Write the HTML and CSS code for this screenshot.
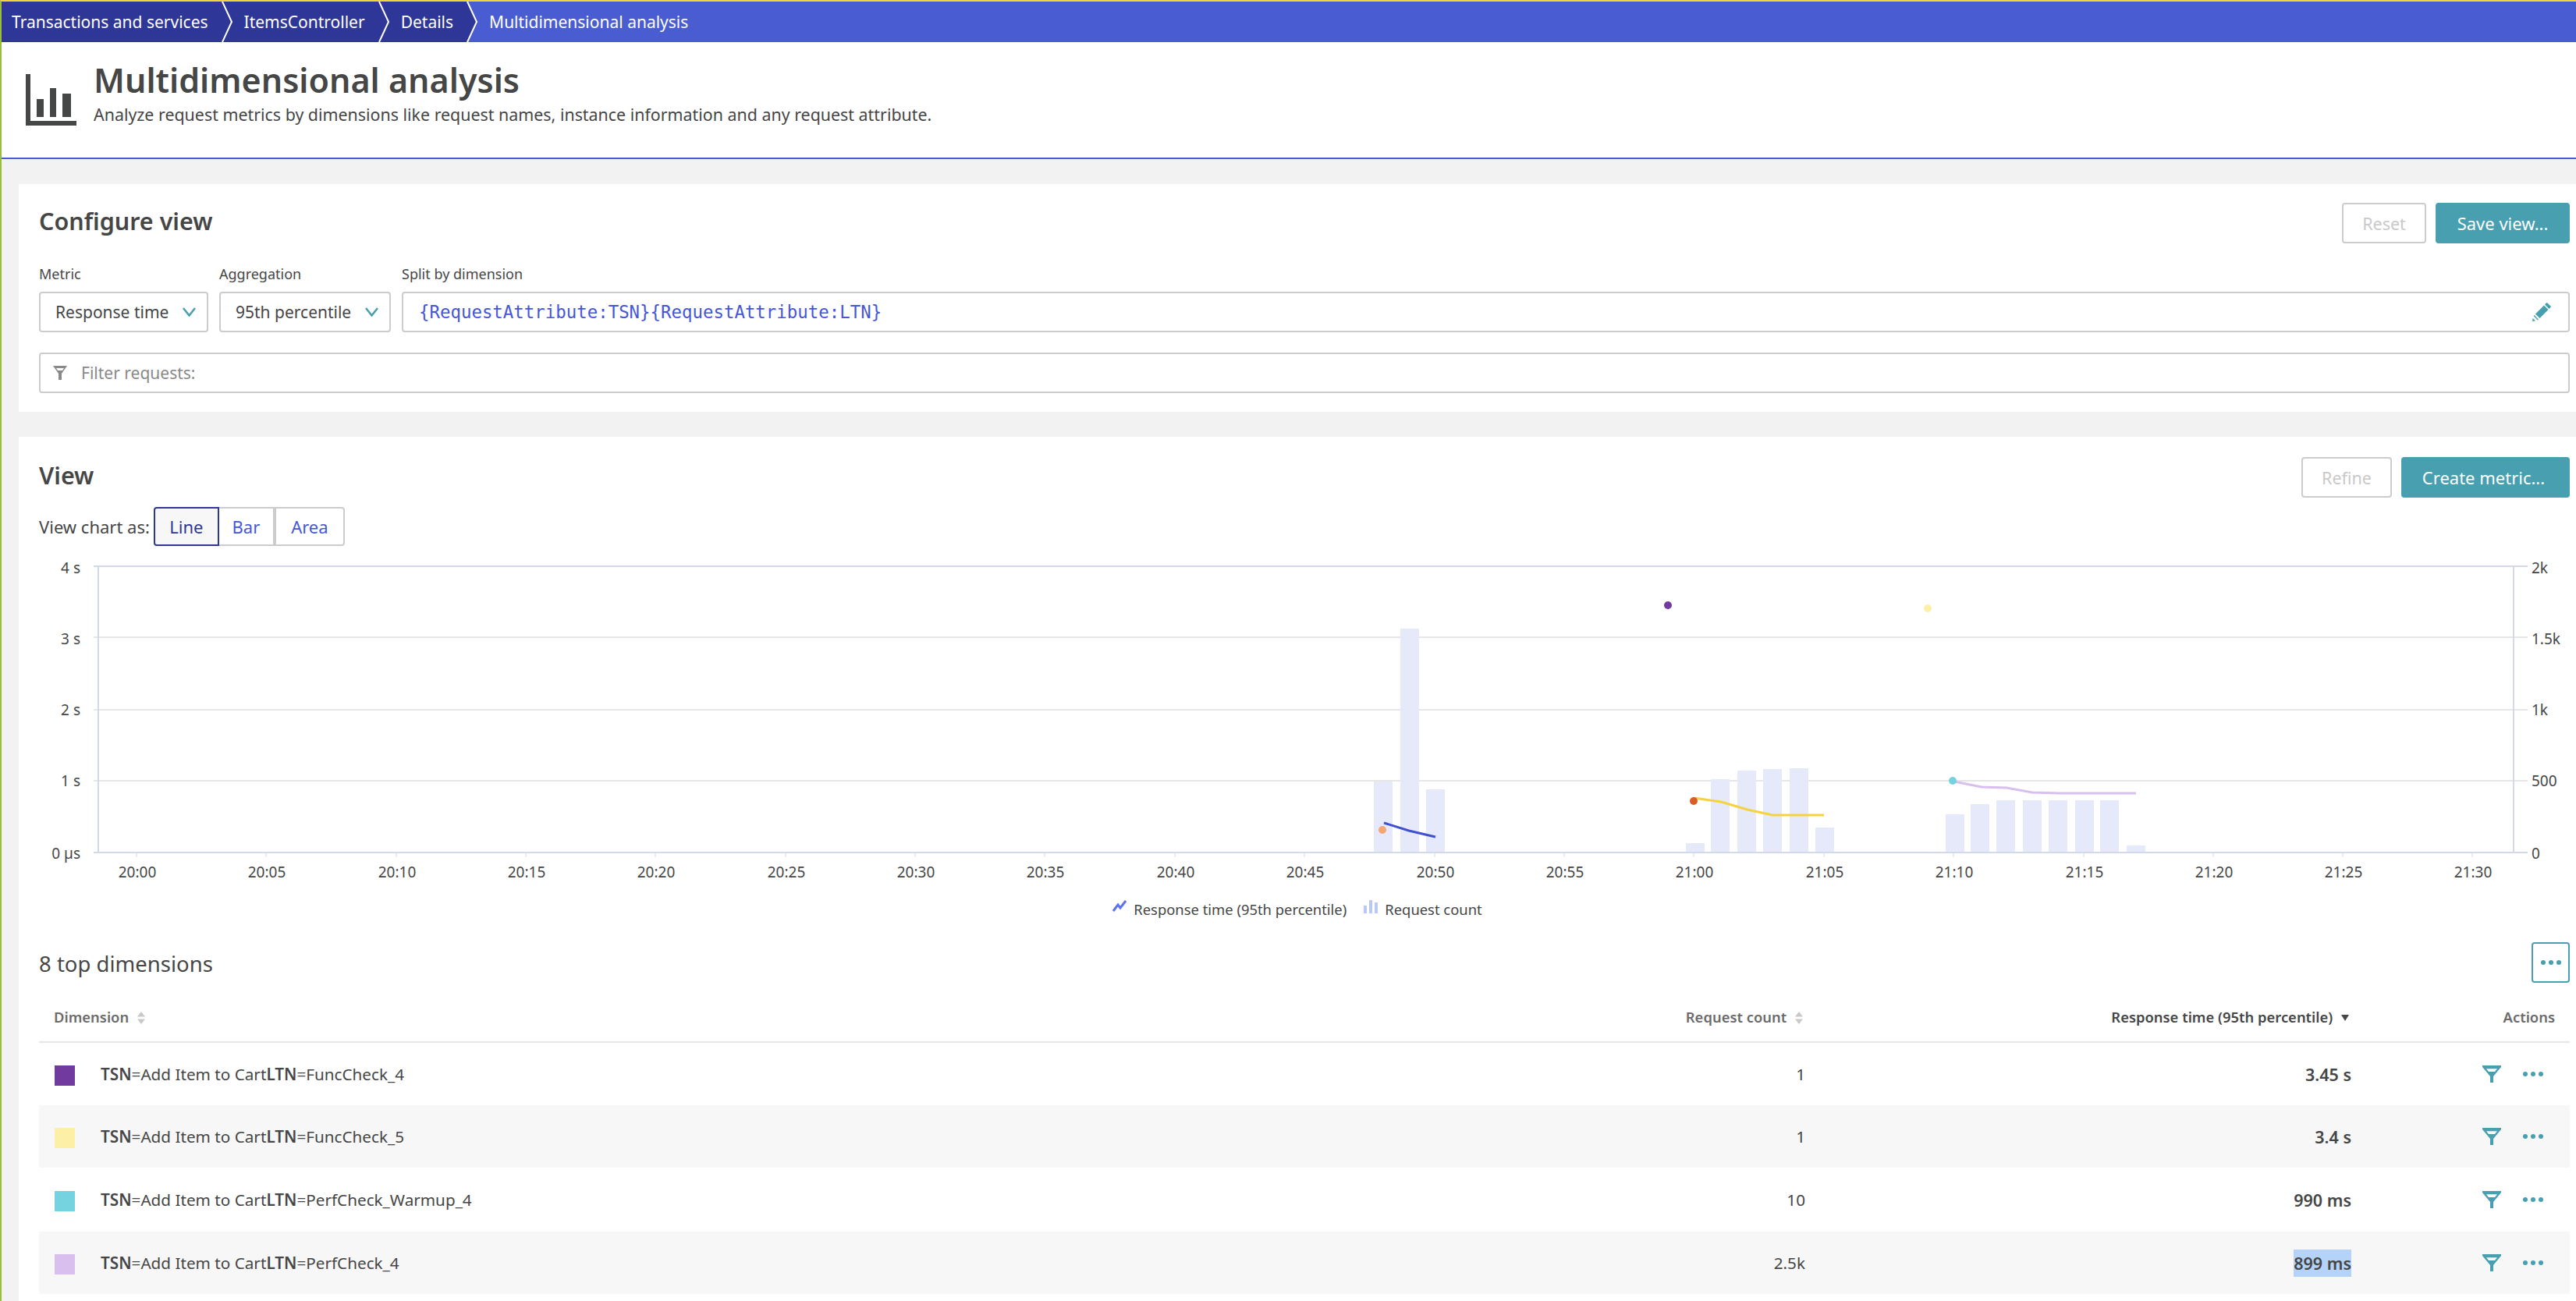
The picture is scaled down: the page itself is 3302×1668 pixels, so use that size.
FILE: index.html
```html
<!DOCTYPE html>
<html lang="en">
<head>
    <meta charset="UTF-8">
    <title>Multidimensional analysis</title>
    <link rel="stylesheet" href="styles.css">
</head>
<body>
    <nav class="breadcrumbs">
        <a class="crumb">Transactions and services</a>
        <svg class="crumb-sep" viewBox="0 0 14 52"><rect class="sep-next" width="14" height="52"/><polygon class="sep-prev" points="0,0 1,0 13,26 1,52 0,52"/><polyline class="sep-line" points="1,0 13,26 1,52"/></svg>
        <a class="crumb">ItemsController</a>
        <svg class="crumb-sep" viewBox="0 0 14 52"><rect class="sep-next" width="14" height="52"/><polygon class="sep-prev" points="0,0 1,0 13,26 1,52 0,52"/><polyline class="sep-line" points="1,0 13,26 1,52"/></svg>
        <a class="crumb">Details</a>
        <svg class="crumb-sep crumb-sep-last" viewBox="0 0 14 52"><rect class="sep-next" width="14" height="52"/><polygon class="sep-prev" points="0,0 1,0 13,26 1,52 0,52"/><polyline class="sep-line" points="1,0 13,26 1,52"/></svg>
        <a class="crumb crumb-active">Multidimensional analysis</a>
    </nav>

    <header class="page-header">
        <svg class="page-icon" viewBox="0 0 65 66">
            <path d="M0 0h6v60h59v6H0z"/>
            <rect x="14" y="32" width="9" height="23"/>
            <rect x="31" y="18" width="8" height="37"/>
            <rect x="47" y="25" width="11" height="30"/>
        </svg>
        <div>
            <h1>Multidimensional analysis</h1>
            <p>Analyze request metrics by dimensions like request names, instance information and any request attribute.</p>
        </div>
    </header>

    <section class="card card-config">
        <div class="card-head">
            <h2>Configure view</h2>
            <div class="actions">
                <button class="btn btn-reset">Reset</button>
                <button class="btn btn-primary btn-save">Save view...</button>
            </div>
        </div>
        <div class="config-grid">
            <div class="field">
                <label>Metric</label>
                <div class="select">Response time
                    <svg class="chevron" viewBox="0 0 17 12"><polyline points="1,1 8.5,10.5 16,1"/></svg>
                </div>
            </div>
            <div class="field">
                <label>Aggregation</label>
                <div class="select">95th percentile
                    <svg class="chevron" viewBox="0 0 17 12"><polyline points="1,1 8.5,10.5 16,1"/></svg>
                </div>
            </div>
            <div class="field">
                <label>Split by dimension</label>
                <div class="select split-input">{RequestAttribute:TSN}{RequestAttribute:LTN}
                    <svg class="pencil" viewBox="0 0 24 24">
                        <polygon points="17.500,0.800 19,0 24,5 23,6.500 21.500,8 16,2.500"/>
                        <polygon points="15,3.500 20.500,9 9.500,20 4,14.500"/>
                        <polygon points="2.500,16 8,21.500 7,22.500 1.500,17"/>
                        <polygon points="0,24 0.700,20 4,23.300"/>
                    </svg>
                </div>
            </div>
        </div>
        <div class="filter-input">
            <svg class="filter-small" viewBox="0 0 18 18"><path fill-rule="evenodd" d="M0 0h18L11 10v8H7v-8zM4 3l2 3h6l2-3z"/></svg>
            Filter requests:
        </div>
    </section>

    <section class="card card-view">
        <div class="card-head">
            <h2>View</h2>
            <div class="actions">
                <button class="btn btn-reset btn-refine">Refine</button>
                <button class="btn btn-primary btn-create">Create metric...</button>
            </div>
        </div>
        <div class="chart-type">
            <span>View chart as:</span>
            <div class="segments">
                <button class="segment segment-active">Line</button>
                <button class="segment segment-bar">Bar</button>
                <button class="segment segment-area">Area</button>
            </div>
        </div>

        <svg class="chart" viewBox="50 715 3244 425">
            <g class="grid">
                <line x1="120" y1="817" x2="3240" y2="817"/>
                <line x1="120" y1="910" x2="3240" y2="910"/>
                <line x1="120" y1="1001" x2="3240" y2="1001"/>
            </g>
            <g class="bars">
                <rect x="1761" y="1002" width="24" height="90"/>
                <rect x="1795" y="806" width="24" height="286"/>
                <rect x="1828" y="1012" width="24" height="80"/>
                <rect x="2161" y="1081" width="24" height="11"/>
                <rect x="2193" y="999" width="24" height="93"/>
                <rect x="2227" y="988" width="24" height="104"/>
                <rect x="2260" y="986" width="24" height="106"/>
                <rect x="2294" y="985" width="24" height="107"/>
                <rect x="2327" y="1061" width="24" height="31"/>
                <rect x="2494" y="1044" width="24" height="48"/>
                <rect x="2526" y="1031" width="24" height="61"/>
                <rect x="2559" y="1026" width="24" height="66"/>
                <rect x="2593" y="1026" width="24" height="66"/>
                <rect x="2626" y="1026" width="24" height="66"/>
                <rect x="2660" y="1026" width="24" height="66"/>
                <rect x="2692" y="1026" width="24" height="66"/>
                <rect x="2726" y="1084" width="24" height="8"/>
            </g>
            <g class="axes">
                <line x1="120" y1="726" x2="3240" y2="726"/>
                <line x1="120" y1="1093" x2="3240" y2="1093"/>
                <line x1="126" y1="726" x2="126" y2="1093"/>
                <line x1="3222" y1="726" x2="3222" y2="1093"/>
            </g>
            <g class="ticks">
                <line x1="175" y1="1093" x2="175" y2="1099"/><line x1="341" y1="1093" x2="341" y2="1099"/>
                <line x1="508" y1="1093" x2="508" y2="1099"/><line x1="674" y1="1093" x2="674" y2="1099"/>
                <line x1="840" y1="1093" x2="840" y2="1099"/><line x1="1007" y1="1093" x2="1007" y2="1099"/>
                <line x1="1173" y1="1093" x2="1173" y2="1099"/><line x1="1339" y1="1093" x2="1339" y2="1099"/>
                <line x1="1506" y1="1093" x2="1506" y2="1099"/><line x1="1672" y1="1093" x2="1672" y2="1099"/>
                <line x1="1839" y1="1093" x2="1839" y2="1099"/><line x1="2005" y1="1093" x2="2005" y2="1099"/>
                <line x1="2171" y1="1093" x2="2171" y2="1099"/><line x1="2338" y1="1093" x2="2338" y2="1099"/>
                <line x1="2504" y1="1093" x2="2504" y2="1099"/><line x1="2671" y1="1093" x2="2671" y2="1099"/>
                <line x1="2837" y1="1093" x2="2837" y2="1099"/><line x1="3003" y1="1093" x2="3003" y2="1099"/>
                <line x1="3169" y1="1093" x2="3169" y2="1099"/>
            </g>
            <g class="series">
                <polyline class="line-blue" points="1774,1055 1806,1065 1840,1073"/>
                <polyline class="line-yellow" points="2171,1023 2206,1028 2240,1038 2272,1045 2338,1045"/>
                <polyline class="line-lilac" points="2505,1002 2540,1009 2572,1010 2605,1016 2640,1017 2738,1017"/>
            </g>
            <circle cx="2138" cy="776" r="5" fill="#703a9e"/>
            <circle cx="2471" cy="780" r="5" fill="#fdf0a6"/>
            <circle cx="1772" cy="1064" r="5" fill="#f5a673"/>
            <circle cx="2171" cy="1027" r="5" fill="#dc5c27"/>
            <circle cx="2503" cy="1001" r="5" fill="#75d3e0"/>
            <g class="y-labels">
                <text x="103" y="735">4 s</text>
                <text x="103" y="826">3 s</text>
                <text x="103" y="917">2 s</text>
                <text x="103" y="1008">1 s</text>
                <text x="103" y="1101">0 µs</text>
            </g>
            <g class="y2-labels">
                <text x="3245" y="735">2k</text>
                <text x="3245" y="826">1.5k</text>
                <text x="3245" y="917">1k</text>
                <text x="3245" y="1008">500</text>
                <text x="3245" y="1101">0</text>
            </g>
            <g class="x-labels">
                <text x="176" y="1125">20:00</text><text x="342" y="1125">20:05</text><text x="509" y="1125">20:10</text>
                <text x="675" y="1125">20:15</text><text x="841" y="1125">20:20</text><text x="1008" y="1125">20:25</text>
                <text x="1174" y="1125">20:30</text><text x="1340" y="1125">20:35</text><text x="1507" y="1125">20:40</text>
                <text x="1673" y="1125">20:45</text><text x="1840" y="1125">20:50</text><text x="2006" y="1125">20:55</text>
                <text x="2172" y="1125">21:00</text><text x="2339" y="1125">21:05</text><text x="2505" y="1125">21:10</text>
                <text x="2672" y="1125">21:15</text><text x="2838" y="1125">21:20</text><text x="3004" y="1125">21:25</text>
                <text x="3170" y="1125">21:30</text>
            </g>
        </svg>
        <div class="legend">
            <span class="legend-item">
                <svg class="legend-icon" viewBox="0 0 18 18"><polyline class="legend-line" points="1,15 7,7 10,11 17,2"/></svg>
                Response time (95th percentile)
            </span>
            <span class="legend-item">
                <svg class="legend-icon" viewBox="0 0 18 18"><path class="legend-bars" d="M0 8h4v10H0zM7 1h4v17H7zM14 4h4v14h-4z"/></svg>
                Request count
            </span>
        </div>

        <div class="dims-head">
            <h3>8 top dimensions</h3>
            <button class="more-btn"><span class="dots"><i></i><i></i><i></i></span></button>
        </div>
        <table class="dims">
            <thead>
                <tr>
                    <th class="col-dim">Dimension <svg class="sort" viewBox="0 0 10 16"><path d="M5 0l5 6.500H0zM5 16l5-6.500H0z"/></svg></th>
                    <th class="col-count">Request count <svg class="sort" viewBox="0 0 10 16"><path d="M5 0l5 6.500H0zM5 16l5-6.500H0z"/></svg></th>
                    <th class="col-time sorted">Response time (95th percentile) <svg class="sort sort-down" viewBox="0 0 10 8"><path d="M0 0h10L5 8z"/></svg></th>
                    <th class="col-actions">Actions</th>
                </tr>
            </thead>
            <tbody>
                <tr>
                    <td><span class="swatch swatch-purple"></span><b>TSN</b>=Add Item to Cart<b>LTN</b>=FuncCheck_4</td>
                    <td class="num">1</td>
                    <td class="num strong">3.45 s</td>
                    <td class="row-actions"><div class="row-actions-in"><svg class="funnel" viewBox="0 0 24 22"><path fill-rule="evenodd" d="M0 0h24v2L14 14v8h-4v-8L0 2zM5 4.300l3 3.700h8l3-3.700z"/></svg><span class="dots"><i></i><i></i><i></i></span></div></td>
                </tr>
                <tr>
                    <td><span class="swatch swatch-yellow"></span><b>TSN</b>=Add Item to Cart<b>LTN</b>=FuncCheck_5</td>
                    <td class="num">1</td>
                    <td class="num strong">3.4 s</td>
                    <td class="row-actions"><div class="row-actions-in"><svg class="funnel" viewBox="0 0 24 22"><path fill-rule="evenodd" d="M0 0h24v2L14 14v8h-4v-8L0 2zM5 4.300l3 3.700h8l3-3.700z"/></svg><span class="dots"><i></i><i></i><i></i></span></div></td>
                </tr>
                <tr class="row-tall">
                    <td><span class="swatch swatch-cyan"></span><b>TSN</b>=Add Item to Cart<b>LTN</b>=PerfCheck_Warmup_4</td>
                    <td class="num">10</td>
                    <td class="num strong">990 ms</td>
                    <td class="row-actions"><div class="row-actions-in"><svg class="funnel" viewBox="0 0 24 22"><path fill-rule="evenodd" d="M0 0h24v2L14 14v8h-4v-8L0 2zM5 4.300l3 3.700h8l3-3.700z"/></svg><span class="dots"><i></i><i></i><i></i></span></div></td>
                </tr>
                <tr>
                    <td><span class="swatch swatch-lilac"></span><b>TSN</b>=Add Item to Cart<b>LTN</b>=PerfCheck_4</td>
                    <td class="num">2.5k</td>
                    <td class="num strong"><mark>899 ms</mark></td>
                    <td class="row-actions"><div class="row-actions-in"><svg class="funnel" viewBox="0 0 24 22"><path fill-rule="evenodd" d="M0 0h24v2L14 14v8h-4v-8L0 2zM5 4.300l3 3.700h8l3-3.700z"/></svg><span class="dots"><i></i><i></i><i></i></span></div></td>
                </tr>
            </tbody>
        </table>
    </section>
</body>
</html>
```

FILE: styles.css
```css
html {
    height: 100%;
    overflow: hidden;
}
body {
    font-family: "Noto Sans", Arial, sans-serif;
    font-size: 21px;
    color: #454646;
    background-color: #f2f2f2;
    margin: 0;
    height: 1668px;
    overflow: hidden;
    border-top: 2px solid #f5d33f;
    border-left: 2px solid #97bf3d;
    box-sizing: border-box;
}

/* breadcrumbs */
.breadcrumbs {
    display: flex;
    height: 52px;
    background-color: #4a5cd2;
    margin-left: -2px;
}
.crumb {
    display: flex;
    align-items: center;
    color: #fff;
    background-color: #2e3697;
    font-size: 21px;
    white-space: nowrap;
    padding: 0 17px 0 15px;
}
.crumb-active {
    flex: 1;
    background-color: #4a5cd2;
}
.crumb-sep {
    width: 14px;
    height: 52px;
    flex-shrink: 0;
}
.sep-next {
    fill: #2e3697;
}
.crumb-sep-last .sep-next {
    fill: #4a5cd2;
}
.sep-prev {
    fill: #2e3697;
}
.sep-line {
    fill: none;
    stroke: #fff;
    stroke-width: 2;
}

/* page header */
.page-header {
    display: flex;
    align-items: flex-start;
    background-color: #fff;
    height: 148px;
    border-bottom: 2px solid #4a5cd2;
    padding-left: 31px;
}
.page-icon {
    width: 65px;
    height: 66px;
    margin: 41px 22px 0 0;
    fill: #454646;
}
h1 {
    font-size: 43px;
    font-weight: 600;
    line-height: 50px;
    margin: 24px 0 0;
}
.page-header p {
    font-size: 21.400px;
    line-height: 28px;
    margin: 5px 0 0;
}

/* cards */
.card {
    background-color: #fff;
    margin-left: 22px;
    padding: 24px 8px 24px 26px;
}
.card-config {
    margin-top: 32px;
}
.card-view {
    margin-top: 32px;
    padding-top: 26px;
    height: 1108px;
    box-sizing: border-box;
}
.card-head {
    display: flex;
    justify-content: space-between;
    align-items: center;
    height: 52px;
}
h2 {
    font-size: 30.500px;
    font-weight: 600;
    margin: 0;
    padding-bottom: 7px;
}
.actions {
    display: flex;
    gap: 12px;
}
.btn {
    height: 52px;
    font-family: inherit;
    font-size: 22px;
    border-radius: 4px;
    padding: 0;
}
.btn-reset {
    width: 108px;
    color: #c9c9c9;
    background-color: #fff;
    border: 2px solid #ccc;
    font-size: 21.500px;
}
.btn-refine {
    width: 116px;
}
.btn-primary {
    color: #fff;
    background-color: #479fb0;
    border: none;
}
.btn-save {
    width: 172px;
}
.btn-create {
    width: 216px;
    padding-right: 5px;
}

/* configure form */
.config-grid {
    display: grid;
    grid-template-columns: 217px 220px 1fr;
    gap: 14px;
    margin-top: 27px;
}
label {
    display: block;
    font-size: 18px;
    line-height: 24px;
    margin-bottom: 11px;
}
.select {
    display: flex;
    justify-content: space-between;
    align-items: center;
    box-sizing: border-box;
    height: 52px;
    border: 2px solid #ccc;
    border-radius: 4px;
    padding: 0 14px 0 19px;
    white-space: nowrap;
}
.chevron {
    width: 17px;
    height: 12px;
    fill: none;
    stroke: #479fb0;
    stroke-width: 2.5;
}
.split-input {
    font-family: "DejaVu Sans Mono", monospace;
    font-size: 22.400px;
    color: #4556d7;
    padding: 0 22px 0 20px;
}
.pencil {
    width: 24px;
    height: 24px;
    fill: #479fb0;
}
.filter-input {
    display: flex;
    align-items: center;
    gap: 18px;
    box-sizing: border-box;
    height: 52px;
    margin-top: 26px;
    border: 2px solid #ccc;
    border-radius: 4px;
    padding-left: 16px;
    color: #898989;
}
.filter-small {
    width: 18px;
    height: 18px;
    fill: #898989;
}

/* chart */
.chart-type {
    display: flex;
    align-items: center;
    gap: 5px;
    margin-top: 12px;
    font-size: 22px;
}
.segments {
    display: flex;
}
.segment {
    box-sizing: border-box;
    height: 50px;
    font-family: inherit;
    font-size: 22px;
    color: #4556d7;
    background-color: #fff;
    border: 2px solid #ccc;
    border-left: none;
    padding: 0;
}
.segment-active {
    width: 84px;
    color: #2e3697;
    background-color: #f7f7f7;
    border: 2px solid #2e3697;
    border-radius: 4px 0 0 4px;
}
.segment-bar {
    width: 73px;
    border-right-width: 4px;
}
.segment-area {
    width: 88px;
    border-radius: 0 4px 4px 0;
}
.chart {
    display: block;
    width: 3244px;
    height: 425px;
    margin-top: 15px;
}
.grid line {
    stroke: #e6e6e6;
    stroke-width: 2;
}
.axes line {
    stroke: #d3d9e8;
    stroke-width: 2;
}
.ticks line {
    stroke: #d3d9e8;
    stroke-width: 1;
}
.bars rect {
    fill: #e6e9fa;
}
.series polyline {
    fill: none;
    stroke-width: 3;
}
.line-blue {
    stroke: #3f51d0;
}
.line-yellow {
    stroke: #f5d33f;
}
.line-lilac {
    stroke: #d8bfed;
}
.y-labels,
.y2-labels,
.x-labels {
    font-size: 19px;
    fill: #454646;
}
.y-labels {
    text-anchor: end;
}
.x-labels {
    text-anchor: middle;
}
.legend {
    display: flex;
    justify-content: center;
    align-items: center;
    gap: 22px;
    height: 50px;
    padding-right: 18px;
    font-size: 18.400px;
}
.legend-item {
    display: flex;
    align-items: center;
    gap: 9px;
}
.legend-icon {
    width: 18px;
    height: 18px;
    margin-top: -6px;
}
.legend-line {
    fill: none;
    stroke: #5b73f0;
    stroke-width: 3;
}
.legend-bars {
    fill: #b9c8f7;
}

/* table */
.dims-head {
    display: flex;
    justify-content: space-between;
    align-items: center;
    height: 52px;
    margin-top: 18px;
}
h3 {
    font-size: 27.500px;
    font-weight: 400;
    margin: 0;
    padding-top: 2px;
}
.more-btn {
    display: flex;
    justify-content: center;
    align-items: center;
    box-sizing: border-box;
    width: 49px;
    height: 52px;
    background-color: #fff;
    border: 2px solid #479fb0;
    border-radius: 4px;
    padding: 0;
}
.dots {
    display: inline-flex;
    gap: 4px;
}
.dots i {
    width: 6px;
    height: 6px;
    border-radius: 50%;
    background-color: #479fb0;
}
.dims {
    width: 3244px;
    table-layout: fixed;
    border-collapse: collapse;
}
.dims th {
    height: 76px;
    box-sizing: border-box;
    vertical-align: bottom;
    padding: 0 0 19px;
    font-size: 18.400px;
    line-height: 24px;
    font-weight: 600;
    color: #6b6b6b;
    text-align: right;
    border-bottom: 2px solid #e6e6e6;
}
.dims th.col-dim {
    width: 1364px;
    text-align: left;
    padding-left: 19px;
}
.dims th.col-count {
    width: 900px;
    padding-right: 3px;
}
.dims th.col-time {
    width: 700px;
    padding-right: 3px;
}
.dims th.col-actions {
    padding-right: 19px;
}
.dims th.sorted {
    color: #454646;
}
.sort {
    width: 10px;
    height: 16px;
    margin-left: 6px;
    fill: #c9c9c9;
    vertical-align: -2px;
}
.sort-down {
    height: 8px;
    fill: #454646;
    vertical-align: 2px;
}
.dims td {
    height: 80px;
    padding: 0;
    font-size: 20.700px;
}
.dims tbody tr:nth-child(even) {
    background-color: #f7f7f7;
}
.dims .row-tall td {
    height: 82px;
}
.dims b {
    font-weight: 600;
}
.swatch {
    display: inline-block;
    width: 26px;
    height: 26px;
    margin: 0 33px 0 20px;
    vertical-align: -7px;
}
.swatch-purple {
    background-color: #703a9e;
}
.swatch-yellow {
    background-color: #fdf0a6;
}
.swatch-cyan {
    background-color: #75d3e0;
}
.swatch-lilac {
    background-color: #d8bfed;
}
.num {
    text-align: right;
}
.dims td.strong {
    font-size: 21.500px;
    font-weight: 600;
}
mark {
    color: inherit;
    background-color: #b5d3f8;
    padding: 3px 0;
}
.row-actions-in {
    display: flex;
    justify-content: flex-end;
    align-items: center;
    gap: 28px;
    padding-right: 34px;
}
.funnel {
    width: 24px;
    height: 22px;
    fill: #479fb0;
}
```
